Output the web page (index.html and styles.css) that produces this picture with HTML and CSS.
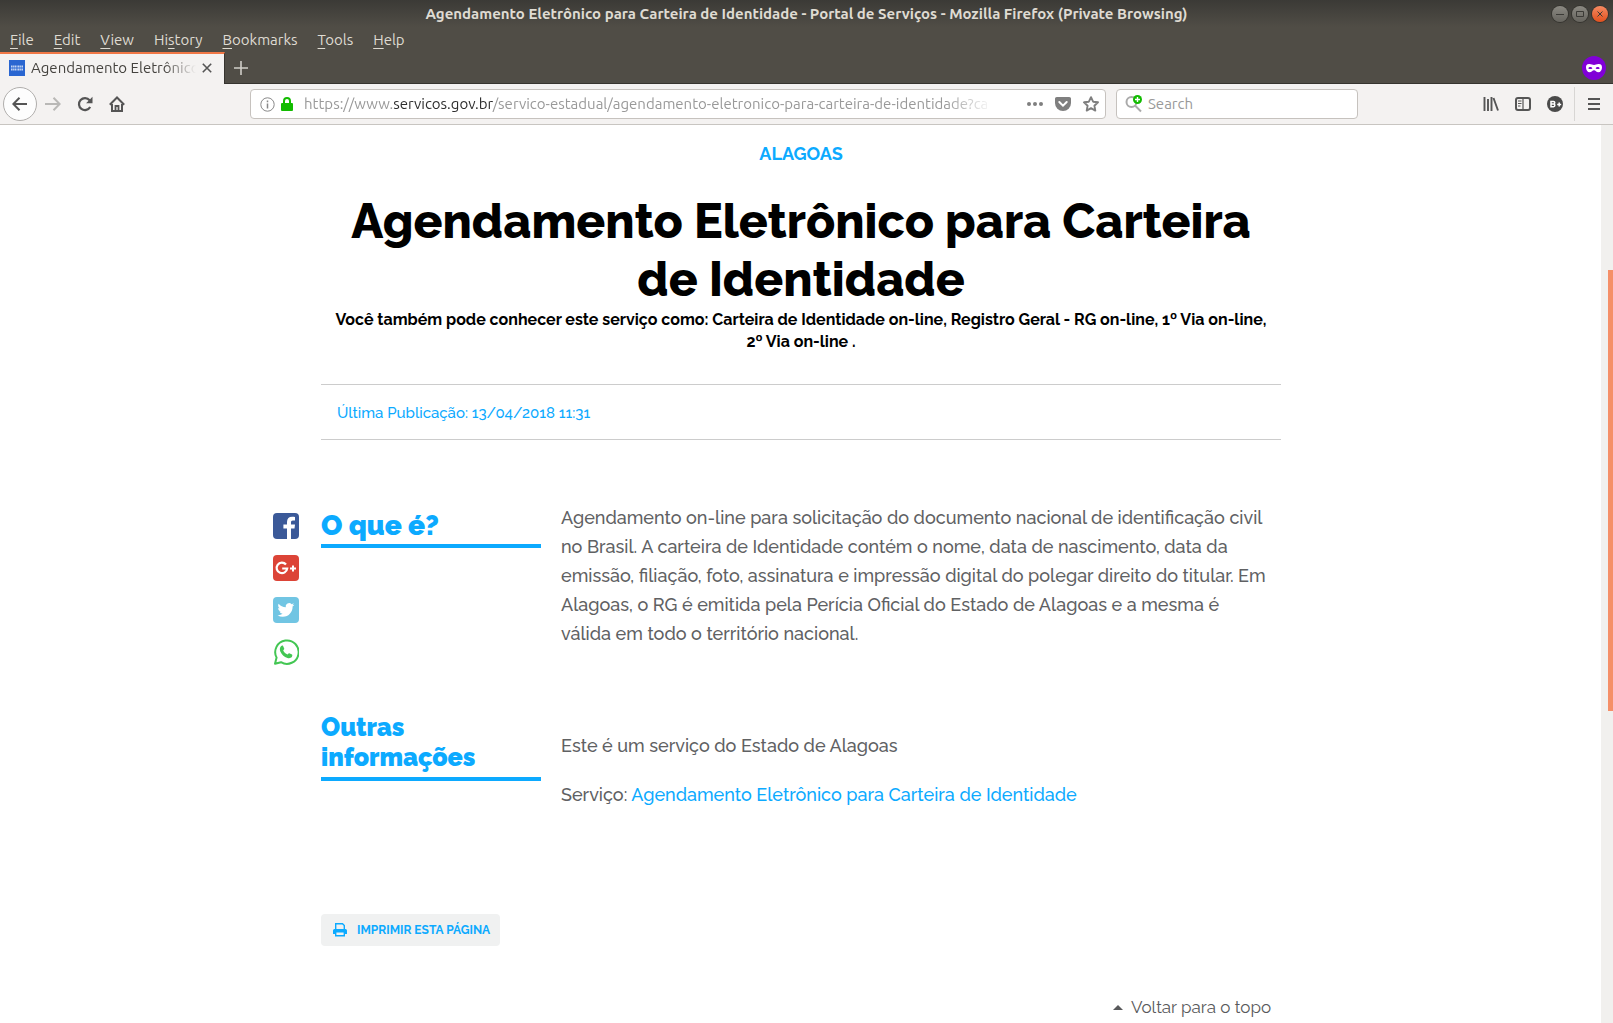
FILE: index.html
```
<!DOCTYPE html>
<html lang="pt-BR">
<head>
<meta charset="utf-8">
<meta name="viewport" content="width=device-width, initial-scale=1">
<title>Agendamento Eletrônico para Carteira de Identidade - Portal de Serviços</title>
<link rel="stylesheet" href="styles.css">
</head>
<body>
<div class="window">
  <header class="chrome" lang="en">
    <div class="titlebar">
      <span class="window-title">Agendamento Eletrônico para Carteira de Identidade - Portal de Serviços - Mozilla Firefox (Private Browsing)</span>
      <div class="window-buttons">
        <button class="win" aria-label="Minimize"><svg width="16" height="16" viewBox="0 0 16 16"><path d="M4 8.500h8"/></svg></button>
        <button class="win" aria-label="Maximize"><svg width="16" height="16" viewBox="0 0 16 16"><path d="M4.500 5.500h7v5h-7z"/></svg></button>
        <button class="win win-close" aria-label="Close"><svg width="16" height="16" viewBox="0 0 16 16"><path d="M5.500 5.500l5 5M10.500 5.500l-5 5"/></svg></button>
      </div>
    </div>
    <nav class="menubar" aria-label="Menu">
      <button><u>F</u>ile</button>
      <button><u>E</u>dit</button>
      <button><u>V</u>iew</button>
      <button>Hi<u>s</u>tory</button>
      <button><u>B</u>ookmarks</button>
      <button><u>T</u>ools</button>
      <button><u>H</u>elp</button>
    </nav>
    <div class="tabbar">
      <div class="tab">
        <svg class="favicon" width="16" height="16" viewBox="0 0 16 16"><path fill="#2a66d1" d="M0 0h16v16H0z"/><path stroke="#c4d5f3" stroke-width="2" stroke-dasharray="1.600 .5 1 .4" d="M2 6.500h12M2 9.500h12"/></svg>
        <span class="tab-title">Agendamento Eletrônico</span>
        <button class="tab-close" aria-label="Close tab"><svg width="10" height="10" viewBox="0 0 10 10"><path d="M.8.8l8.400 8.400M9.200.8L.8 9.200" stroke="#555" stroke-width="1.600"/></svg></button>
      </div>
      <button class="new-tab" aria-label="New tab"><svg width="14" height="14" viewBox="0 0 14 14"><path d="M7 0v14M0 7h14" stroke="#d0cec8" stroke-width="1.600"/></svg></button>
      <svg class="mask" width="24" height="24" viewBox="0 0 24 24"><circle cx="12" cy="12" r="12" fill="#8000d7"/><path fill="#fff" fill-rule="evenodd" d="M4 11.500C4 8.500 5.500 8 7.500 8c2.200 0 3 1 4.500 1s2.300-1 4.500-1c2 0 3.500.5 3.500 3.500 0 2.600-1.500 4.800-3.600 4.800-2.100 0-2.900-2-4.400-2s-2.300 2-4.400 2C5.500 16.300 4 14.100 4 11.500zm2.200.7c.9 1.200 3.300 1.200 4.200 0-.9-1.700-3.300-1.700-4.200 0zm7.400 0c.9 1.200 3.300 1.200 4.200 0-.9-1.700-3.300-1.700-4.200 0z"/></svg>
    </div>
    <div class="navbar">
      <button class="tool back" aria-label="Back"><svg width="16" height="16" viewBox="0 0 16 16"><path d="M15 8H1.500M7.500 1.800L1.300 8l6.200 6.200" stroke="#555" stroke-width="2"/></svg></button>
      <button class="tool" aria-label="Forward"><svg width="16" height="16" viewBox="0 0 16 16"><path d="M0 8h14.500M8.500 1.800L14.700 8l-6.200 6.200" stroke="#b9b8b6" stroke-width="2"/></svg></button>
      <button class="tool" aria-label="Reload"><svg width="16" height="16" viewBox="0 0 16 16"><path d="M13.200 11A6 6 0 1 1 12.600 4.200" stroke="#555" stroke-width="2.200"/><path d="M15.500.8v6.400H9.100z" fill="#555"/></svg></button>
      <button class="tool" aria-label="Home"><svg width="16" height="16" viewBox="0 0 16 16"><path d="M.8 8.700L8 1.500l7.200 7.200M3 8v7h10V8" stroke="#555" stroke-width="2"/><path d="M6.500 14.500V10h3v4.500" stroke="#555" stroke-width="1.800"/></svg></button>
      <div class="spacer"></div>
      <div class="field url">
        <svg width="15" height="15" viewBox="0 0 15 15"><circle cx="7.500" cy="7.500" r="6.700" stroke="#888"/><path d="M7.500 6.500v5M7.500 3.500v1.700" stroke="#888" stroke-width="1.500"/></svg>
        <svg width="12" height="14" viewBox="0 0 12 14"><path d="M3 7V4a3 3 0 0 1 6 0v3" stroke="#12bc00" stroke-width="2"/><rect y="6" width="12" height="8" rx="1" fill="#12bc00"/></svg>
        <div class="url-text" role="textbox" aria-label="Address">https://www.<b>servicos.gov.br</b>/servico-estadual/agendamento-eletronico-para-carteira-de-identidade?ca</div>
        <button class="page-action" aria-label="Page actions"><svg width="16" height="16" viewBox="0 0 16 16"><g fill="#7f7f7f"><circle cx="2" cy="8" r="2"/><circle cx="8" cy="8" r="2"/><circle cx="14" cy="8" r="2"/></g></svg></button>
        <button class="page-action" aria-label="Save to Pocket"><svg width="16" height="16" viewBox="0 0 16 16"><path d="M1.800 1h12.400C15.300 1 16 1.700 16 2.800V7a8 8 0 0 1-16 0V2.800C0 1.700.7 1 1.800 1z" fill="#7f7f7f"/><path d="M4.300 6L8 9.600 11.700 6" stroke="#fff" stroke-width="2" stroke-linecap="round"/></svg></button>
        <button class="page-action" aria-label="Bookmark this page"><svg width="16" height="16" viewBox="0 0 16 16"><path d="M8 1.200l2.100 4.500 4.900.6-3.600 3.400.9 4.900L8 12.200l-4.300 2.400.9-4.900L1 6.300l4.900-.6z" stroke="#7f7f7f" stroke-width="1.900" stroke-linejoin="round"/></svg></button>
      </div>
      <div class="field search">
        <svg width="18" height="18" viewBox="0 0 18 18"><circle cx="6.500" cy="7" r="5" stroke="#aaa" stroke-width="2"/><path d="M10 10.500l6 6" stroke="#aaa" stroke-width="2"/><circle cx="12.500" cy="4.500" r="4.500" fill="#12bc00"/><path d="M12.500 2v5M10 4.500h5" stroke="#fff" stroke-width="1.400"/></svg>
        <input type="text" placeholder="Search" aria-label="Search">
      </div>
      <div class="spacer"></div>
      <button class="tool" aria-label="Library"><svg width="16" height="16" viewBox="0 0 16 16"><path d="M1.500 1v14M5 3v12M8.500 1v14M10.500 2l4.500 12.500" stroke="#555" stroke-width="1.900"/></svg></button>
      <button class="tool" aria-label="Sidebars"><svg width="16" height="16" viewBox="0 0 16 16"><rect x="1" y="2" width="14" height="12" rx="2" stroke="#555" stroke-width="2"/><path d="M8 2v12M3 5h3.500M3 7.500h3.500M3 10h2.500" stroke="#555" stroke-width="1.200"/></svg></button>
      <button class="tool" aria-label="Extension"><svg width="16" height="16" viewBox="0 0 16 16"><circle cx="8" cy="8" r="8" fill="#4a4a4a"/><path d="M4 5.500h2.500a1.200 1.200 0 0 1 0 2.500 1.300 1.300 0 0 1 0 2.700H4zM4 8h3M10.200 8.500h4M12.200 6.500v4" stroke="#fff" stroke-width="1.500"/></svg></button>
      <button class="tool menu" aria-label="Open menu"><svg width="12" height="12" viewBox="0 0 12 12"><path d="M0 1h12M0 6h12M0 11h12" stroke="#555" stroke-width="2"/></svg></button>
    </div>
  </header>

  <div class="viewport">
    <main class="page">
      <article class="service">
        <header class="service-head">
          <p class="state">ALAGOAS</p>
          <h1>Agendamento Eletrônico para Carteira<br>de Identidade</h1>
          <p class="aliases">Você também pode conhecer este serviço como: Carteira de Identidade on-line, Registro Geral - RG on-line, 1º Via on-line,<br>2º Via on-line .</p>
        </header>
        <p class="published">Última Publicação: 13/04/2018 11:31</p>

        <div class="body">
          <div class="share">
            <a href="#facebook" aria-label="Facebook"><svg width="26" height="26" viewBox="0 0 26 26"><rect width="26" height="26" rx="4" fill="#3b5998"/><path fill="#fff" d="M14 26V15.500h-3.600v-4H14V9c0-3.400 2-5.200 5.100-5.200 1.200 0 2.300.1 2.900.2v3.400h-2c-1.700 0-2 .8-2 2v2.100h4l-.5 4H18V26z"/></svg></a>
            <a href="#google" aria-label="Google+"><svg width="26" height="26" viewBox="0 0 26 26"><rect width="26" height="26" rx="4" fill="#dc4437"/><path d="M13 9.500A5.300 5.300 0 1 0 14.200 13.500H9.200" stroke="#fff" stroke-width="2.200"/><path d="M17 13.500h6M20 10.500v6" stroke="#fff" stroke-width="2"/></svg></a>
            <a href="#twitter" aria-label="Twitter"><svg width="26" height="26" viewBox="0 0 26 26"><rect width="26" height="26" rx="4" fill="#71c5e3"/><path fill="#fff" transform="translate(4.500 4.500) scale(.7)" d="M23.950 4.570a10 10 0 0 1-2.820.77 4.960 4.960 0 0 0 2.160-2.720c-.95.550-2 .95-3.130 1.180a4.920 4.920 0 0 0-8.380 4.480C7.690 8.100 4.070 6.130 1.640 3.160a4.820 4.820 0 0 0-.67 2.480c0 1.710.87 3.210 2.190 4.100a4.900 4.900 0 0 1-2.230-.62v.06a4.920 4.920 0 0 0 3.950 4.830 4.900 4.900 0 0 1-2.210.08 4.930 4.930 0 0 0 4.600 3.420A9.870 9.870 0 0 1 0 19.540a13.940 13.940 0 0 0 7.550 2.210c9.050 0 14-7.500 14-13.980 0-.21 0-.42-.02-.63a9.940 9.940 0 0 0 2.460-2.550z"/></svg></a>
            <a href="#whatsapp" aria-label="WhatsApp"><svg width="26" height="26" viewBox="0 0 26 26"><path d="M2 24.800l1.600-6.200A11.700 11.700 0 1 1 8 23.200z" stroke="#43c653" stroke-width="2" stroke-linejoin="round"/><path fill="#43c653" d="M8.200 7.100c.5-.6 1.600-.7 1.900 0l1.100 2.500c.2.500-.2 1-1 1.900.9 1.900 2.400 3.200 4.400 4 .7-.7 1.100-1.500 1.700-1.200l2.700 1.300c.6.300.3 1.700-.2 2.400-.9 1.100-2.700 1.400-4.300.9-3.500-1.100-5.900-3.400-7.300-6.700-.7-1.700-.3-3.900 1-5.100z"/></svg></a>
          </div>

          <section class="block what">
            <h2>O que é?</h2>
            <p>Agendamento on-line para solicitação do documento nacional de identificação civil<br>no Brasil. A carteira de Identidade contém o nome, data de nascimento, data da<br>emissão, filiação, foto, assinatura e impressão digital do polegar direito do titular. Em<br>Alagoas, o RG é emitida pela Perícia Oficial do Estado de Alagoas e a mesma é<br>válida em todo o território nacional.</p>
          </section>
          <section class="block other">
            <h2>Outras informações</h2>
            <div class="info">
              <p>Este é um serviço do Estado de Alagoas</p>
              <p>Serviço: <a href="#servico">Agendamento Eletrônico para Carteira de Identidade</a></p>
            </div>
          </section>
        </div>

        <button class="print"><svg width="14" height="14" viewBox="0 0 14 14"><path d="M2.700 7V.8h6.800l1.800 1.800V7" stroke="#0caaff" stroke-width="1.400"/><path fill="#0caaff" fill-rule="evenodd" d="M1.500 6h11A1.500 1.500 0 0 1 14 7.500V11h-2v2.500H2V11H0V7.500A1.500 1.500 0 0 1 1.500 6zm1.900 3.500v2.600h7.200V9.500z"/></svg>IMPRIMIR ESTA PÁGINA</button>
        <a class="to-top" href="#top"><svg width="10" height="5" viewBox="0 0 10 5"><path d="M0 5l5-5 5 5z" fill="#58595b"/></svg>Voltar para o topo</a>
      </article>
    </main>
    <div class="scrollbar"><span class="above"></span><span class="thumb"></span><span class="below"></span></div>
  </div>
</div>
</body>
</html>
```

FILE: styles.css
```
* { box-sizing: border-box; }

body {
  margin: 0;
  background: #fff;
  color: #606163;
  font-family: Raleway, Inter, sans-serif;
  font-size: 18px;
  font-weight: 500;
  overflow: hidden;
}

h1, h2, p { margin: 0; }
svg { display: block; flex: none; fill: none; }
button { font: inherit; color: inherit; border: 0; padding: 0; background: none; }
a { color: #0caaff; text-decoration: none; }

.window { height: 100vh; display: flex; flex-direction: column; }

/* Browser chrome */
.chrome {
  flex: none;
  font: 15px/18px Ubuntu, "Open Sans", sans-serif;
  color: #dfdbd2;
  background: #504d46;
}

.titlebar {
  height: 27px;
  display: flex;
  align-items: center;
  justify-content: center;
  position: relative;
  background: linear-gradient(#3b3a36, #504d46);
  font-weight: 700;
}
.window-buttons { position: absolute; right: 5px; top: 6px; display: flex; gap: 4px; }
.win { border-radius: 50%; background: linear-gradient(#8b8982, #66645e); box-shadow: 0 0 0 1px #35342f; }
.win svg { stroke: #3b3a36; stroke-width: 1; }
.win-close { background: linear-gradient(#f58a62, #e2501d); }

.menubar { height: 25px; display: flex; align-items: center; gap: 20px; padding-left: 10px; }
.menubar u { text-underline-offset: 3px; }

.tabbar {
  height: 32px;
  display: flex;
  align-items: center;
  border-bottom: 1px solid #36342f;
  padding-right: 7px;
}
.tab {
  width: 225px;
  height: 32px;
  display: flex;
  align-items: center;
  align-self: flex-start;
  gap: 6px;
  padding: 0 12px 2px 9px;
  background: #f4f2f1;
  color: #45433f;
  border-top: 2px solid #f07746;
  border-right: 1px solid #36342f;
}
.tab-title {
  flex: 1;
  min-width: 0;
  overflow: hidden;
  white-space: nowrap;
  mask-image: linear-gradient(to left, transparent, #000 32px);
}
.new-tab { margin-left: 9px; }
.mask { margin-left: auto; }

.navbar {
  height: 41px;
  display: flex;
  align-items: center;
  padding-left: 3px;
  background: #f4f2f1;
  border-bottom: 1px solid #c8c5c1;
}
.tool { width: 32px; height: 34px; display: grid; place-items: center; }
.back { width: 34px; border: 1px solid #b0aeac; border-radius: 50%; background: #fdfdfd; }
.menu { width: 39px; border-left: 1px solid #d8d6d4; margin-left: 3px; }
.spacer { width: 117px; }

.field {
  height: 30px;
  display: flex;
  align-items: center;
  background: #fff;
  border: 1px solid #c6c2be;
  border-radius: 4px;
}
.url { flex: 1; min-width: 0; gap: 6px; padding: 0 6px 0 9px; }
.url-text {
  flex: 1;
  min-width: 0;
  margin: 0 28px 0 5px;
  overflow: hidden;
  white-space: nowrap;
  color: #999;
  mask-image: linear-gradient(to left, transparent, #000 48px);
}
.url-text b { font-weight: 400; color: #2e2e2e; }
.page-action + .page-action { margin-left: 6px; }
.search { width: 242px; margin-left: 10px; padding-left: 8px; gap: 5px; }
.search input { flex: 1; min-width: 0; border: 0; padding: 0; background: none; font: inherit; }
.search input::placeholder { color: #999; opacity: 1; }

/* Web page */
.viewport { flex: 1; min-height: 0; display: flex; }
.page { flex: 1; min-width: 0; overflow: hidden; padding: 15px 64px 0 65px; }
.scrollbar { width: 12px; display: flex; flex-direction: column; padding-left: 7px; background: #f1f0ee; }
.above { flex: 145; }
.thumb { flex: 441; background: #f58f68; }
.below { flex: 312; }

.service { max-width: 960px; margin: 0 auto; }
.service-head { text-align: center; color: #000; white-space: nowrap; }
.state { color: #0caaff; font-weight: 700; line-height: 28px; }
h1 { margin-top: 24px; font-size: 48px; font-weight: 800; line-height: 58px; }
.aliases { padding-top: 1px; font-size: 16px; font-weight: 700; line-height: 22px; }
.published {
  margin-top: 31px;
  padding: 17px 16px 15px;
  border: solid #ccc;
  border-width: 1px 0;
  color: #0caaff;
  font-size: 15px;
  line-height: 22px;
}

.body { position: relative; margin-top: 63px; }
.share { position: absolute; left: -48px; top: 10px; display: grid; gap: 16px; }
.share a { display: block; }
.block { display: grid; grid-template-columns: 220px 1fr; column-gap: 20px; align-items: start; line-height: 29px; white-space: nowrap; }
h2 { color: #0caaff; font-weight: 900; border-bottom: 4px solid #0caaff; white-space: normal; }
.what h2 { margin-top: 5px; font-size: 28px; line-height: 36px; }
.other { margin-top: 64px; }
.other h2 { padding-bottom: 5px; font-size: 25px; line-height: 30px; }
.info { display: grid; gap: 20px; margin-top: 19px; }

.print {
  display: flex;
  align-items: center;
  gap: 10px;
  height: 32px;
  margin-top: 105px;
  padding: 0 10px 0 12px;
  border-radius: 4px;
  background: #f0f1f1;
  color: #0caaff;
  font-size: 12px;
  font-weight: 700;
}
.to-top {
  display: flex;
  align-items: center;
  justify-content: flex-end;
  gap: 8px;
  margin-top: 48px;
  padding-right: 10px;
  color: #58595b;
  font-size: 17px;
  font-weight: 400;
  line-height: 26px;
}
```
